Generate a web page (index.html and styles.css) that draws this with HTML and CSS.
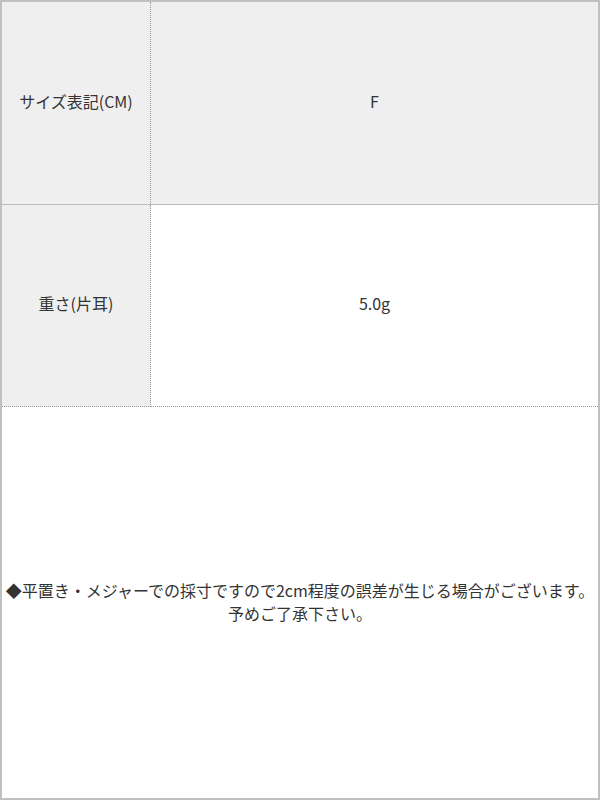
FILE: index.html
```html
<!DOCTYPE html>
<html lang="ja">
<head>
    <meta charset="UTF-8">
    <meta name="viewport" content="width=device-width, initial-scale=1.0">
    <title>サイズ表記</title>
    <link rel="stylesheet" href="styles.css">
</head>
<body>
    <div class="frame">
        <table class="spec">
            <tr class="row-size">
                <th>サイズ表記(CM)</th>
                <td>F</td>
            </tr>
            <tr class="row-weight">
                <th>重さ(片耳)</th>
                <td>5.0g</td>
            </tr>
        </table>
        <div class="note">
            <p>◆平置き・メジャーでの採寸ですので2cm程度の誤差が生じる場合がございます。<br>予めご了承下さい。</p>
        </div>
    </div>
</body>
</html>
```

FILE: styles.css
```css
html, body {
    margin: 0;
    padding: 0;
}
body {
    font-family: "Noto Sans CJK JP", "Noto Sans", sans-serif;
    color: #333;
    font-size: 16px;
    background: #fff;
}
.frame {
    width: 600px;
    height: 800px;
    box-sizing: border-box;
    border: 2px solid #c0c0c0;
    display: flex;
    flex-direction: column;
}
.spec {
    width: 100%;
    border-collapse: collapse;
    table-layout: fixed;
}
.spec th,
.spec td {
    text-align: center;
    vertical-align: middle;
    font-weight: normal;
    padding: 0 0 5px;
}
.spec th {
    width: 148px;
    background: #efefef;
    border-right: 1px dotted #999;
}
.row-size th,
.row-size td {
    height: 197px;
    background: #efefef;
    border-bottom: 1px solid #bbb;
}
.row-weight th,
.row-weight td {
    height: 196px;
    border-bottom: 1px dotted #999;
}
.row-weight td {
    background: #fff;
}
.note {
    flex: 1;
    display: flex;
    align-items: center;
    justify-content: center;
    text-align: center;
}
.note p {
    margin: 0 0 2px;
    line-height: 23px;
    white-space: nowrap;
}
```
